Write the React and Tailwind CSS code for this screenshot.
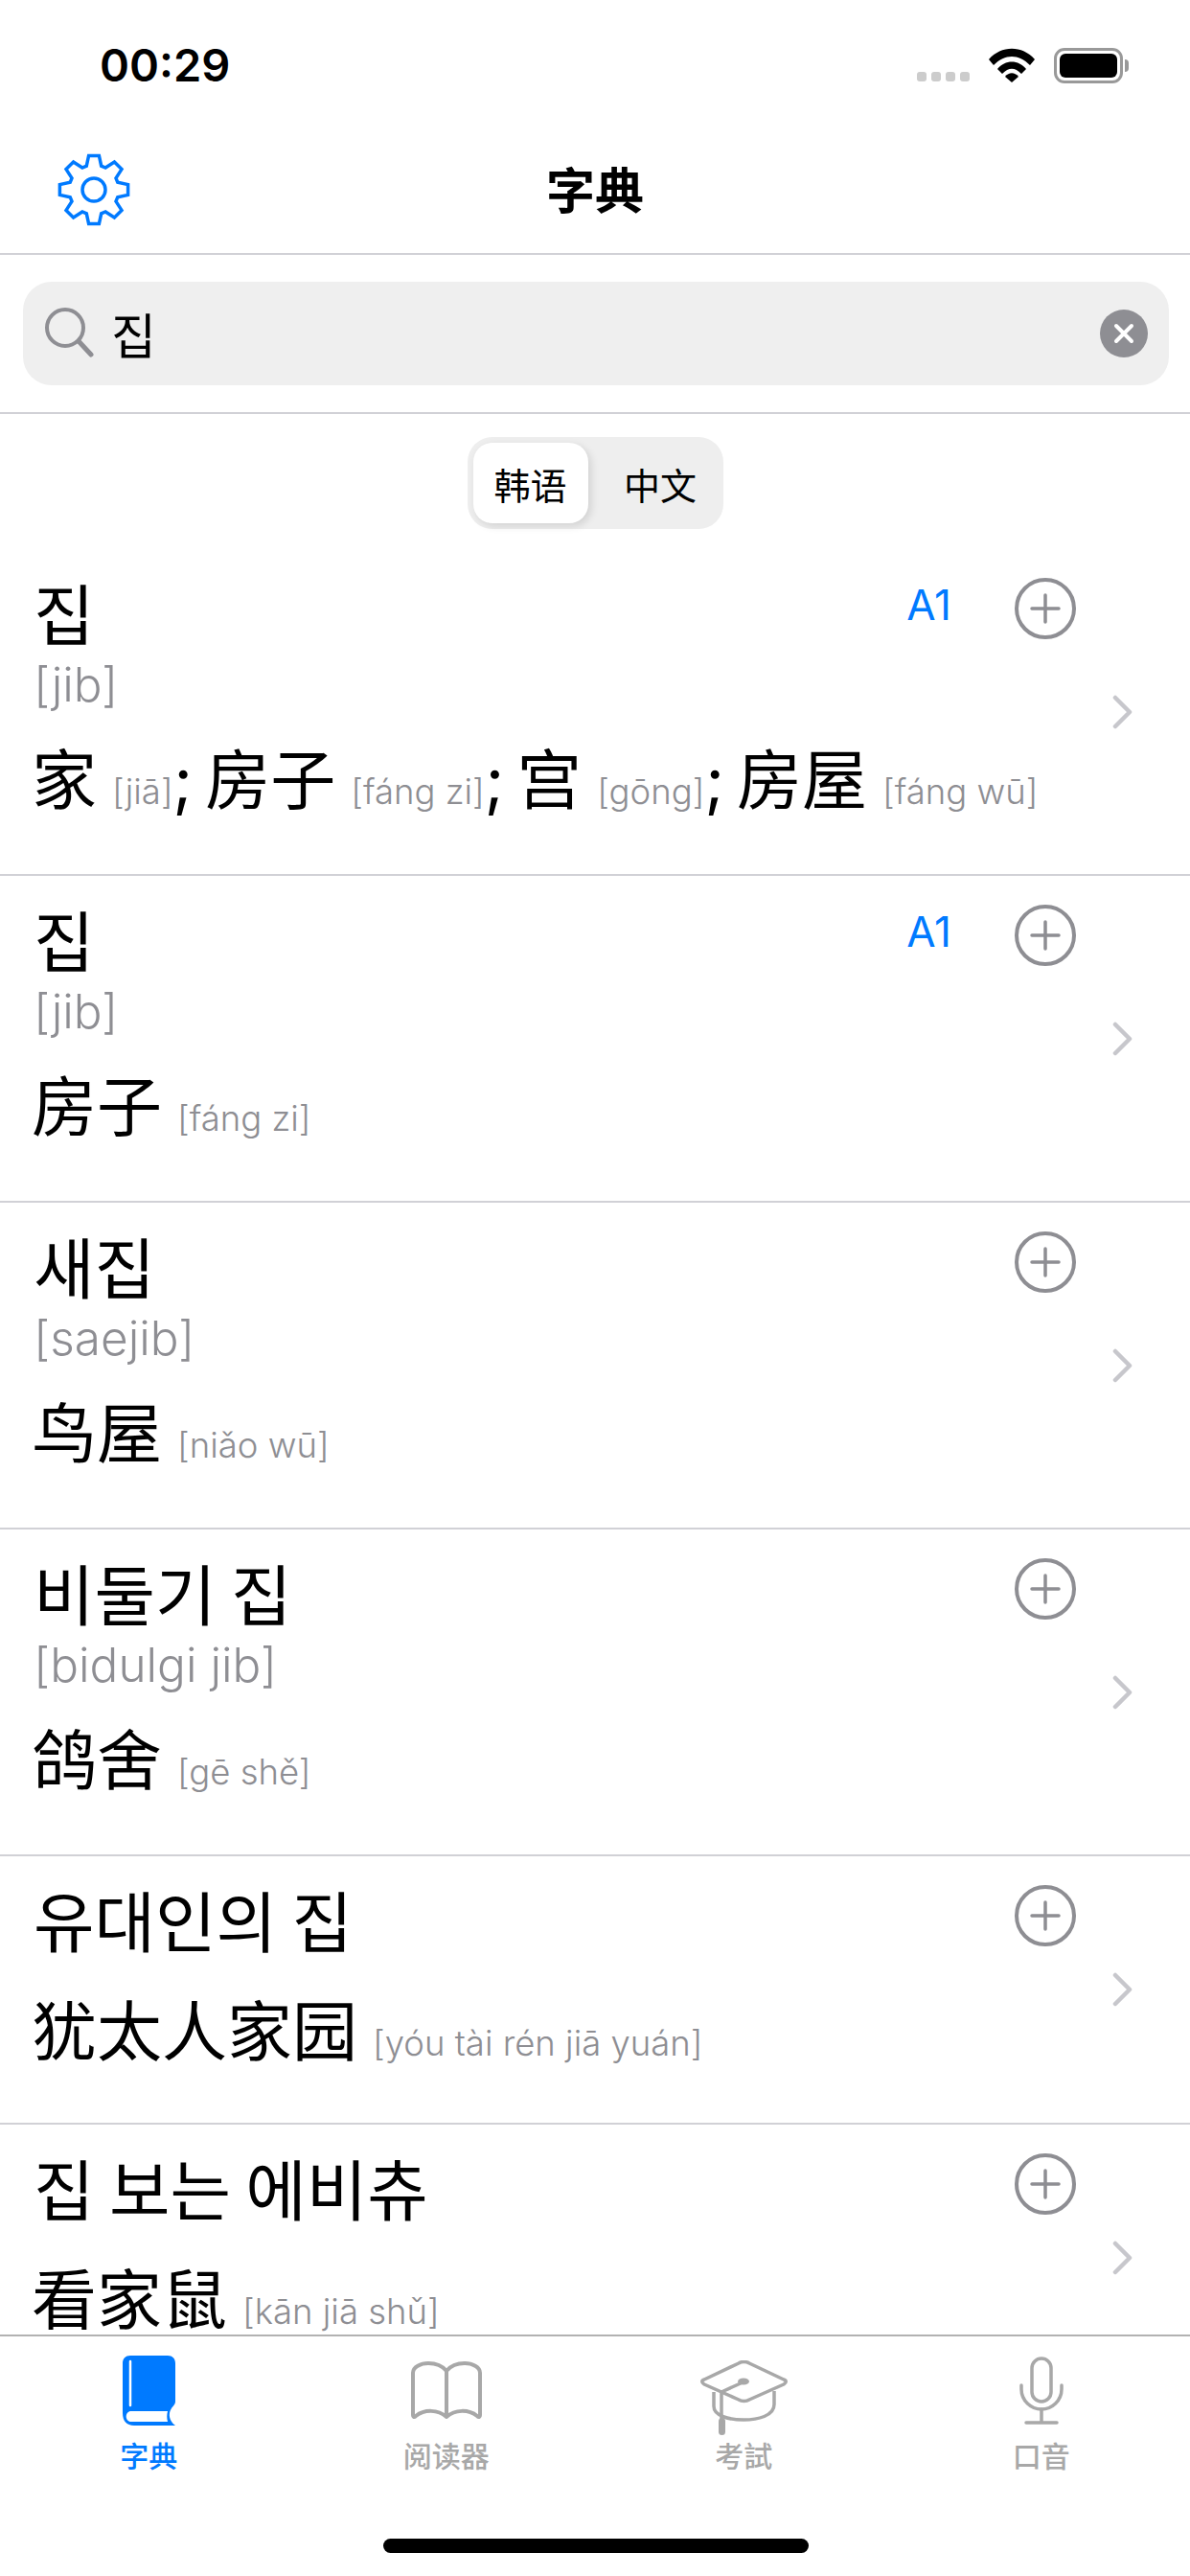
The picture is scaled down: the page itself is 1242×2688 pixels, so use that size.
import React from "react";

const FONT = "font-['Inter','Noto_Sans_CJK_SC','Noto_Sans_CJK_KR',sans-serif]";

const entries = [
  {
    word: "집",
    level: "A1",
    roman: "jib",
    senses: [
      ["家", "jiā"],
      ["房子", "fáng zi"],
      ["宫", "gōng"],
      ["房屋", "fáng wū"],
    ],
  },
  { word: "집", level: "A1", roman: "jib", senses: [["房子", "fáng zi"]] },
  { word: "새집", roman: "saejib", senses: [["鸟屋", "niǎo wū"]] },
  { word: "비둘기 집", roman: "bidulgi jib", senses: [["鸽舍", "gē shě"]] },
  { word: "유대인의 집", senses: [["犹太人家园", "yóu tài rén jiā yuán"]] },
  { word: "집 보는 에비츄", senses: [["看家鼠", "kān jiā shǔ"]] },
];

function Wifi() {
  return (
    <svg width="48" height="36" viewBox="0 0 48 36" fill="#000">
      <path d="M0 12 C13 -3 35 -3 48 12 L43 18 C31 6 17 6 5 18 Z" />
      <path d="M9 22 C17 12 31 12 39 22 L34 27 C27 20 21 20 14 27 Z" />
      <path d="M17 30 C21 25 27 25 31 30 L24 36 Z" />
    </svg>
  );
}

function Battery() {
  return (
    <div className="flex items-center">
      <div className="w-[72px] h-[37px] rounded-[11px] border-[3px] border-[#999] p-[3px]">
        <div className="w-full h-full rounded-[6px] bg-black" />
      </div>
      <div className="w-[4px] h-[13px] ml-[2px] rounded-r-full bg-[#999]" />
    </div>
  );
}

function Gear() {
  // eight teeth stepped around a ring
  const r1 = 26;
  const r2 = 36;
  const n = 8;
  let d = "";
  for (let i = 0; i < n; i++) {
    const a = (i / n) * Math.PI * 2 - Math.PI / 2;
    const pts = [
      [r1, -0.3],
      [r2, -0.15],
      [r2, 0.15],
      [r1, 0.3],
    ];
    pts.forEach(([r, o]) => {
      const x = 38 + r * Math.cos(a + o);
      const y = 38 + r * Math.sin(a + o);
      d += `${d ? "L" : "M"}${x.toFixed(1)} ${y.toFixed(1)} `;
    });
  }
  d += "Z";
  return (
    <svg width="76" height="76" viewBox="0 0 76 76" fill="none" stroke="#007aff" strokeWidth="3.5">
      <path d={d} />
      <circle cx="38" cy="38" r="12" />
    </svg>
  );
}

function PlusButton() {
  return (
    <svg width="64" height="64" viewBox="0 0 64 64" fill="none" stroke="#8e8e93" strokeLinecap="round">
      <circle cx="32" cy="32" r="30" strokeWidth="4" />
      <path d="M32 18 V46 M18 32 H46" strokeWidth="3.5" />
    </svg>
  );
}

function Chevron() {
  return (
    <svg width="22" height="36" viewBox="0 0 22 36" fill="none" stroke="#c7c7cc" strokeWidth="4.5" strokeLinecap="round" strokeLinejoin="round">
      <path d="M3 3 L18 18 L3 33" />
    </svg>
  );
}

function Row({ entry }) {
  const hasRoman = Boolean(entry.roman);
  return (
    <div className={`flex items-center border-b-2 border-[#d1d1d6] pl-[35px] pr-[59px] ${hasRoman ? "h-[341px]" : "h-[280px]"}`}>
      <div className="flex-1 min-w-0 self-start">
        <div className="flex items-center h-[64px] mt-[30px]">
          <div className="flex-1 mt-[5px] text-[69px] leading-[64px] text-black font-['Noto_Sans_CJK_KR',sans-serif]">{entry.word}</div>
          {entry.level && <div className="text-[44px] leading-none text-[#007aff] mr-[66px] mb-[8px]">{entry.level}</div>}
          <div className="mr-[38px]"><PlusButton /></div>
        </div>
        {hasRoman && <div className="text-[49.5px] leading-[60px] mt-[17px] text-[#8e8e93] font-light">[{entry.roman}]</div>}
        <div className={`flex items-baseline whitespace-nowrap -ml-[2px] ${hasRoman ? "mt-[26px]" : "mt-[45px]"}`}>
          {entry.senses.map(([han, pinyin], i) => (
            <React.Fragment key={han}>
              {i > 0 && <span className="text-[68px] leading-[80px] text-black mr-[13px]">;</span>}
              <span className="text-[68px] leading-[80px] text-black font-['Noto_Sans_CJK_SC',sans-serif]">{han}</span>
              <span className="text-[36.5px] ml-[16px] text-[#8e8e93] font-light">[{pinyin}]</span>
            </React.Fragment>
          ))}
        </div>
      </div>
      <Chevron />
    </div>
  );
}

function TabItem({ label, active, children }) {
  return (
    <div className={`flex-1 flex flex-col items-center ${active ? "text-[#007aff]" : "text-[#a8a8a8]"}`}>
      <div className="h-[90px] flex items-center justify-center">{children}</div>
      <div className="text-[30px] leading-[36px] mt-[6px] font-medium">{label}</div>
    </div>
  );
}

export default function App() {
  return (
    <div className={`w-[1242px] h-[2688px] bg-white flex flex-col overflow-hidden ${FONT}`}>
      <div className="h-[132px] shrink-0 flex items-start justify-between pt-[40px] pl-[104px] pr-[64px]">
        <div className="text-[47px] leading-[56px] font-semibold text-black">00:29</div>
        <div className="flex items-center gap-[20px] h-[56px]">
          <div className="flex gap-[5px] mt-[24px]">
            <i className="w-[10px] h-[10px] rounded-[3px] bg-[#ccc]" />
            <i className="w-[10px] h-[10px] rounded-[3px] bg-[#ccc]" />
            <i className="w-[10px] h-[10px] rounded-[3px] bg-[#ccc]" />
            <i className="w-[10px] h-[10px] rounded-[3px] bg-[#ccc]" />
          </div>
          <Wifi />
          <Battery />
        </div>
      </div>

      <div className="h-[134px] shrink-0 relative flex items-center justify-center border-b-2 border-[#d1d1d6]">
        <div className="absolute left-[60px] top-[28px]"><Gear /></div>
        <div className="text-[51px] mb-[3px] font-bold text-black font-['Noto_Sans_CJK_SC',sans-serif]">字典</div>
      </div>

      <div className="h-[166px] shrink-0 pl-[24px] pr-[22px] pt-[28px] border-b-2 border-[#d1d1d6]">
        <div className="h-[108px] rounded-[30px] bg-[#efefef] flex items-center pl-[22px] pr-[22px]">
          <svg width="52" height="52" viewBox="0 0 52 52" fill="none" stroke="#8e8e93" strokeWidth="4" strokeLinecap="round" className="mb-[2px]">
            <circle cx="22" cy="21" r="19" />
            <path d="M36 35 L49 49" strokeWidth="5" />
          </svg>
          <div className="flex-1 ml-[18px] text-[51px] text-black font-['Noto_Sans_CJK_KR',sans-serif]">집</div>
          <div className="w-[50px] h-[50px] rounded-full bg-[#8e8e93] flex items-center justify-center">
            <svg width="22" height="22" viewBox="0 0 22 22" fill="none" stroke="#fff" strokeWidth="4" strokeLinecap="round">
              <path d="M3 3 L19 19 M19 3 L3 19" />
            </svg>
          </div>
        </div>
      </div>

      <div className="h-[141px] shrink-0 flex justify-center pt-[24px]">
        <div className="w-[267px] h-[96px] rounded-[26px] bg-[#eeeeee] p-[6px] flex">
          <div className="w-[120px] h-[84px] rounded-[20px] bg-white shadow-[3px_3px_8px_rgba(0,0,0,0.12)] flex items-center justify-center text-[38px] text-black font-['Noto_Sans_CJK_SC',sans-serif]">韩语</div>
          <div className="flex-1 pl-[16px] flex items-center justify-center text-[38px] text-black font-['Noto_Sans_CJK_SC',sans-serif]">中文</div>
        </div>
      </div>

      <div className="flex-1 min-h-0 overflow-hidden">
        {entries.map((entry, i) => (
          <Row key={i} entry={entry} />
        ))}
      </div>

      <div className="h-[252px] shrink-0 border-t-2 border-[#b2b2b2] bg-white relative">
        <div className="flex pt-[11px]">
          <TabItem label="字典" active>
            <svg width="55" height="73" viewBox="0 0 55 73" fill="#007aff">
              <path d="M8 0 H47 C52 0 55 3 55 8 V48 C55 52 50 54 49 60 C48 66 52 71 55 73 H12 C4 73 0 68 0 60 V8 C0 3 3 0 8 0 Z" />
              <path d="M8 6 V52" fill="none" stroke="#fff" strokeWidth="2.5" strokeLinecap="round" />
              <path d="M9 58 H47 C46 62 46 65 47 69 H9 C2 69 2 58 9 58 Z" fill="#fff" />
            </svg>
          </TabItem>
          <TabItem label="阅读器">
            <svg width="74" height="60" viewBox="0 0 74 60" fill="none" stroke="currentColor" strokeWidth="4" strokeLinejoin="round">
              <path d="M37 10 C32 4 24 2 18 2 C10 2 2 6 2 12 V56 C2 58 3 59 5 57 C14 50 28 50 37 58 C46 50 60 50 69 57 C71 59 72 58 72 56 V12 C72 6 64 2 56 2 C50 2 42 4 37 10 Z" />
              <path d="M37 10 V58" />
            </svg>
          </TabItem>
          <TabItem label="考試">
            <svg width="91" height="78" viewBox="0 0 91 78" fill="none" stroke="currentColor" strokeWidth="3.5" strokeLinejoin="round" className="mt-[16px]">
              <path d="M40 3 C43 1 48 1 51 3 L87 20 C90 21 90 23 87 25 L51 41 C48 43 43 43 40 41 L4 25 C1 23 1 21 4 20 Z" />
              <path d="M14 33 V48 C14 58 30 62 45 62 C60 62 77 58 77 46 V32" />
              <path d="M44 23 L22 33 V62" />
              <ellipse cx="45" cy="22" rx="6" ry="3.5" fill="currentColor" stroke="none" />
              <rect x="19" y="60" width="7" height="18" rx="3.5" fill="currentColor" stroke="none" />
            </svg>
          </TabItem>
          <TabItem label="口音">
            <svg width="46" height="71" viewBox="0 0 46 71" fill="none" stroke="currentColor" strokeWidth="3.5" strokeLinecap="round">
              <rect x="13" y="2" width="20" height="45" rx="10" />
              <path d="M2 30 V34 C2 46 12 55 23 55 C34 55 44 46 44 34 V30" />
              <path d="M23 55 V69 M7 69 H39" />
            </svg>
          </TabItem>
        </div>
        <div className="absolute left-[400px] top-[211px] w-[444px] h-[15px] rounded-full bg-black" />
      </div>
    </div>
  );
}
